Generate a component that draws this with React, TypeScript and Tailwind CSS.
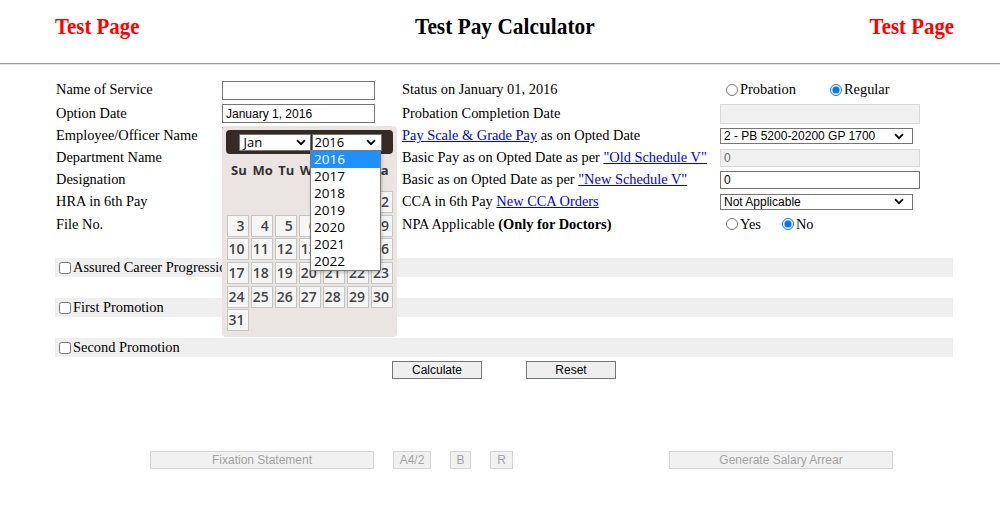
import React from "react";

const serif = "font-['Liberation_Serif','Times_New_Roman',serif]";
const arial = "font-['Liberation_Sans',Arial,sans-serif]";
const ui = "font-['Open_Sans','Noto_Sans',sans-serif]";

function Chevron() {
  return (
    <svg width="10" height="7" viewBox="0 0 10 7" className="shrink-0">
      <path d="M1 1.2 L5 5.2 L9 1.2" fill="none" stroke="#000" strokeWidth="1.8" />
    </svg>
  );
}

function SelectBox({ value, className }: { value: string; className: string }) {
  return (
    <div
      className={`flex items-center justify-between border border-[#767676] bg-white pl-[3px] pr-[8px] text-[12px] leading-none ${arial} ${className}`}
    >
      <span>{value}</span>
      <Chevron />
    </div>
  );
}

function TextBox({ value = "", disabled = false, className = "" }: { value?: string; disabled?: boolean; className?: string }) {
  return (
    <input
      readOnly
      defaultValue={value}
      className={`border px-[3px] text-[12px] leading-none outline-none ${arial} ${
        disabled ? "border-[#d9d9d9] bg-[#f0f0f0] text-[#6d6d6d]" : "border-[#767676] bg-white text-black"
      } ${className}`}
    />
  );
}

function Radio({ checked = false, name }: { checked?: boolean; name: string }) {
  return (
    <input
      type="radio"
      name={name}
      defaultChecked={checked}
      className="ml-[6px] mr-[2px] size-[12px] accent-[#0075ff]"
    />
  );
}

const days: (number | null)[] = [null, null, null, null, null, ...Array.from({ length: 31 }, (_, i) => i + 1)];

function Calendar() {
  return (
    <div className={`absolute left-0 top-[calc(100%+2px)] z-20 h-[211px] w-[175px] rounded-[4px] bg-[#eae5e2] p-[4px] ${ui}`}>
      {/* header bar */}
      <div className="flex h-[24px] items-center justify-center gap-px rounded-[4px] bg-[#362b24] pl-[1px]">
        <div className="flex h-[17px] w-[72px] items-center justify-between border border-[#767676] bg-white pl-[4px] pr-[4px] text-[13px] leading-none">
          <span>Jan</span>
          <Chevron />
        </div>
        <div className="flex h-[17px] w-[70px] items-center justify-between border border-[#767676] bg-white pl-[2px] pr-[5px] text-[13px] leading-none">
          <span>2016</span>
          <Chevron />
        </div>
      </div>

      {/* week days */}
      <div className="mt-[6px] ml-px grid h-[20px] w-[166px] grid-cols-7 items-center text-center text-[13px] font-bold text-[#333]">
        {["Su", "Mo", "Tu", "We", "Th", "Fr", "Sa"].map((d) => (
          <span key={d}>{d}</span>
        ))}
      </div>

      {/* day cells */}
      <div className="mt-[11px] ml-px grid w-[166px] grid-cols-7 gap-x-[2.5px] gap-y-[1.6px]">
        {days.map((d, i) =>
          d === null ? (
            <div key={i} className="h-[22px]" />
          ) : (
            <div
              key={i}
              className="flex h-[22px] items-center justify-end border border-[#c5c5c5] bg-[#f6f6f6] pr-[3px] text-[14px] font-semibold leading-none text-[#454545]"
            >
              {d}
            </div>
          )
        )}
      </div>

      {/* open year list */}
      <div className="absolute left-[88px] top-[24px] w-[71px] border border-[#7a7a7a] bg-white text-[13.5px] leading-[16px] text-black shadow-[1px_2px_3px_rgba(0,0,0,0.2)]">
        {[2016, 2017, 2018, 2019, 2020, 2021, 2022].map((y) => (
          <div key={y} className={`h-[17px] pl-[3px] ${y === 2016 ? "bg-[#1e90ff] text-white" : ""}`}>
            {y}
          </div>
        ))}
      </div>
    </div>
  );
}

function Row({
  h,
  label,
  input,
  middle,
  right,
}: {
  h: string;
  label: React.ReactNode;
  input: React.ReactNode;
  middle: React.ReactNode;
  right: React.ReactNode;
}) {
  return (
    <div className={`flex items-center ${h}`}>
      <div className="w-[167px] pl-px">{label}</div>
      <div className="flex w-[180px] items-center">{input}</div>
      <div className="w-[318px]">{middle}</div>
      <div className="flex flex-1 items-center">{right}</div>
    </div>
  );
}

const link = "text-[#0000ee] underline";

function SectionBar({ label }: { label: string }) {
  return (
    <div className="flex h-[19px] items-center bg-[#efefef]">
      <input type="checkbox" className="ml-[4px] mr-[1px] size-[12px]" />
      <span className="ml-px">{label}</span>
    </div>
  );
}

function GreyButton({ label, w }: { label: string; w: string }) {
  return (
    <button
      disabled
      className={`h-[18px] border border-[#d4d4d4] bg-[#f1f1f1] text-[12px] leading-none text-[#a3a3a3] ${arial} ${w}`}
    >
      {label}
    </button>
  );
}

export default function App() {
  return (
    <div className={`min-h-[527px] w-full bg-white text-[14.4px] text-black ${serif}`}>
      {/* Header */}
      <div className="mx-[55px] mr-[46px] flex h-[63px] items-start justify-between pt-[11px] text-[24px] font-bold leading-[30px]">
        <span className="inline-block origin-left scale-x-[0.87] text-[#f00]">Test Page</span>
        <span className="inline-block origin-center scale-x-[0.89]">Test Pay Calculator</span>
        <span className="inline-block origin-right scale-x-[0.87] text-[#f00]">Test Page</span>
      </div>
      <div className="h-[2px] border-t border-b border-t-[#9c9c9c] border-b-[#e6e6e6]" />

      {/* Form */}
      <div className="ml-[55px] w-[898px] pt-[13px]">
        <Row
          h="h-[24px]"
          label="Name of Service"
          input={<TextBox className="h-[19px] w-[153px]" />}
          middle="Status on January 01, 2016"
          right={
            <>
              <Radio name="status" />
              <span>Probation</span>
              <span className="ml-[28px] flex items-center">
                <Radio name="status" checked />
                <span>Regular</span>
              </span>
            </>
          }
        />
        <Row
          h="h-[23px]"
          label="Option Date"
          input={
            <div className="relative">
              <TextBox value="January 1, 2016" className="h-[19px] w-[153px]" />
              <Calendar />
            </div>
          }
          middle="Probation Completion Date"
          right={<TextBox disabled className="h-[20px] w-[200px]" />}
        />
        <Row
          h="h-[22px]"
          label="Employee/Officer Name"
          input={<TextBox className="h-[19px] w-[153px]" />}
          middle={
            <>
              <span className={link}>Pay Scale &amp; Grade Pay</span> as on Opted Date
            </>
          }
          right={<SelectBox value="2 - PB 5200-20200 GP 1700" className="h-[16px] w-[193px]" />}
        />
        <Row
          h="h-[22px]"
          label="Department Name"
          input={<TextBox className="h-[19px] w-[153px]" />}
          middle={
            <>
              Basic Pay as on Opted Date as per <span className={link}>"Old Schedule V"</span>
            </>
          }
          right={<TextBox disabled value="0" className="h-[18px] w-[200px]" />}
        />
        <Row
          h="h-[22px]"
          label="Designation"
          input={<TextBox className="h-[19px] w-[153px]" />}
          middle={
            <>
              Basic as on Opted Date as per <span className={link}>"New Schedule V"</span>
            </>
          }
          right={<TextBox value="0" className="h-[18px] w-[200px]" />}
        />
        <Row
          h="h-[21px]"
          label="HRA in 6th Pay"
          input={<SelectBox value="" className="h-[16px] w-[153px]" />}
          middle={
            <>
              CCA in 6th Pay <span className={link}>New CCA Orders</span>
            </>
          }
          right={<SelectBox value="Not Applicable" className="h-[16px] w-[193px]" />}
        />
        <Row
          h="h-[25px]"
          label="File No."
          input={<TextBox className="h-[19px] w-[153px]" />}
          middle={
            <>
              NPA Applicable <b>(Only for Doctors)</b>
            </>
          }
          right={
            <>
              <Radio name="npa" />
              <span>Yes</span>
              <span className="ml-[15px] flex items-center">
                <Radio name="npa" checked />
                <span>No</span>
              </span>
            </>
          }
        />

        <div className="mt-[21px] flex flex-col gap-[21px]">
          <SectionBar label="Assured Career Progression (ACP)" />
          <SectionBar label="First Promotion" />
          <SectionBar label="Second Promotion" />
        </div>

        <div className={`mt-[4px] flex justify-center gap-[44px] text-[12px] ${arial}`}>
          <button className="h-[18px] w-[90px] border border-[#767676] bg-[#efefef] leading-none">Calculate</button>
          <button className="h-[18px] w-[90px] border border-[#767676] bg-[#efefef] leading-none">Reset</button>
        </div>

        <div className="mt-[72px] flex pl-[95px]">
          <GreyButton label="Fixation Statement" w="w-[224px]" />
          <GreyButton label="A4/2" w="ml-[19px] w-[38px]" />
          <GreyButton label="B" w="ml-[19px] w-[21px]" />
          <GreyButton label="R" w="ml-[19px] w-[23px]" />
          <GreyButton label="Generate Salary Arrear" w="ml-[156px] w-[224px]" />
        </div>
      </div>
    </div>
  );
}
